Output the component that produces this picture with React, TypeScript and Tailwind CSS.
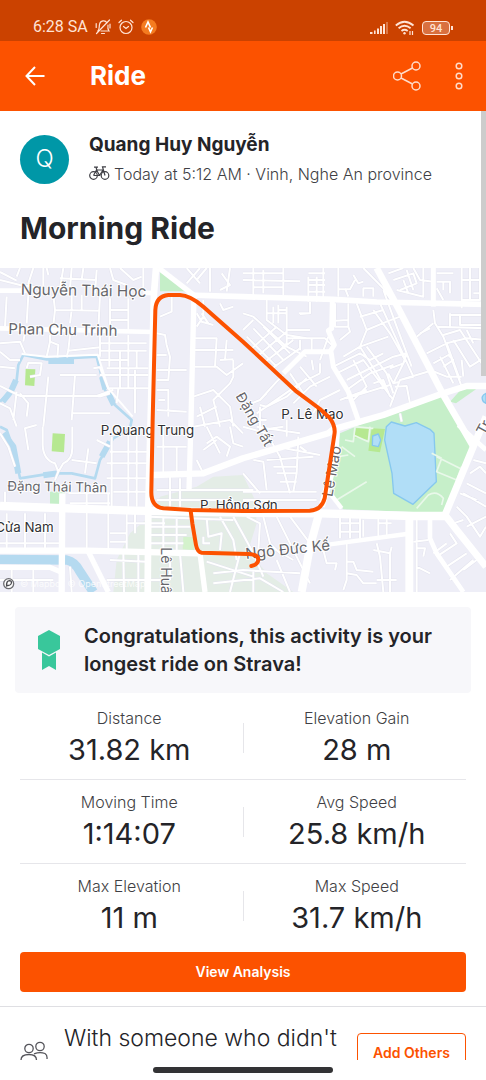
import type { ReactNode } from "react";

const stats = [
  [
    { label: "Distance", value: "31.82 km" },
    { label: "Elevation Gain", value: "28 m" },
  ],
  [
    { label: "Moving Time", value: "1:14:07" },
    { label: "Avg Speed", value: "25.8 km/h" },
  ],
  [
    { label: "Max Elevation", value: "11 m" },
    { label: "Max Speed", value: "31.7 km/h" },
  ],
];

// streets, grouped by part of town
const minorRoads = [
  // north west
  "M60 24 L50 50 M100 24 L85 70 L90 85 M0 60 L60 75 L130 85 M0 36 L50 62 M130 24 V85 M190 24 L180 85 M180 55 L290 60 M215 24 L210 85 M290 30 L285 100 M330 24 L340 60 L380 75 M250 24 L245 60 M360 24 L400 60 L425 50 M430 24 V85 M380 75 V100",
  "M20 110 L15 200 M85 105 L80 190 M160 105 L165 150 L160 195 M215 105 V150 L210 190 M245 105 V155 M300 105 L295 210 M330 115 V210 M385 115 V210 M165 150 L300 152 M330 150 H385 M330 180 H385",
  "M0 250 L60 245 L75 280 M75 215 L70 245 M150 225 V245 L140 290 M150 245 L175 255 L172 292 M210 225 L205 270 L200 292 M205 272 L300 262 M300 225 V290 M328 220 V320 M385 225 V320 M300 250 H440 M300 272 H440 M300 300 H385 M320 325 H445 M300 345 H445 M360 275 V385 M410 275 V325 M280 325 L300 322 L325 385 H450 M385 325 V385 M405 330 V460 M355 385 L350 430",
  "M0 275 L30 300 L60 300 M0 320 L45 325 M90 350 L120 345 L125 310 L85 308 L80 325 M180 345 H290 M225 345 L215 480 M60 408 H290 L340 390 M60 400 L85 430 L80 470 M0 378 L60 408 M145 350 L140 400 L130 500 M215 460 H330 M50 395 L40 480 M330 400 L300 410",
  // west fortress
  "M0 430 L30 445 L50 500 M110 495 L75 505 L85 570 M128 500 V555 Q130 600 165 610 L175 635 L190 610 Q218 600 217 560 V500 M265 565 L255 640 M215 600 L290 610 M290 540 L330 560 M175 635 L165 660 M335 530 V740 M385 500 V740 M410 520 V740 M330 575 H450 M320 610 H450 M320 655 H450 M340 695 H450 M0 520 L25 560 L45 620 M140 24 L145 45",
  // south west
  "M15 695 V735 M75 760 V870 M135 760 V870 M0 790 H60 M20 760 V870 M0 850 H180 M260 700 V870 M325 700 V870 M205 700 H330 M210 730 H330 M380 750 V870 M330 820 H380 M330 845 H380 M405 760 V820 M445 790 H495 M445 825 H560 M380 790 H440 M100 920 V996 M35 920 V996 M0 960 H160 M210 920 L215 996 M370 880 L372 996 M415 880 V996 M320 960 L500 960 M330 900 L440 905",
  // centre west
  "M470 220 L495 225 L500 255 L510 290 L505 360 H470 M470 285 H500 M470 390 H505 V470 M475 420 L495 420 M515 110 V155 L480 170 M470 330 H560 M470 450 L560 455 M490 500 V640 M470 560 H560 M530 560 V650 M470 690 H760 M510 650 V740 M540 655 V740 M470 720 H700",
  "M590 160 L605 185 L640 195 M600 70 L560 24 M560 70 L600 24 M620 24 L590 60 M585 235 H650 L645 320 M610 120 V170 L590 200 M585 270 H700 M585 320 H650 L680 345 L729 310 M660 300 L700 298 M680 240 L675 300 M700 300 V350 L690 370 L640 420 L660 500 M580 410 L640 390 L690 440 L700 500 M590 470 L650 440 M600 440 L615 500 M625 190 L605 160 M660 130 L670 150 L700 140 M580 500 L690 480 L729 520 M620 550 L650 530 L690 560 L680 590 M690 500 L700 550 L729 560 M590 600 L610 640 M620 500 L660 580 M650 540 L610 570",
  // north centre
  "M630 24 V95 M665 40 L690 75 L660 90 M690 24 L680 95 M760 24 V105 M850 24 V105 M729 60 L900 64 M760 82 H850 M790 30 V100 M729 40 H850 M925 50 V125 M970 24 V125 M925 60 H975 M925 75 H975 M925 95 H975 M950 50 V125 M975 40 H925 M1015 24 V110 M1015 88 H1050 L1065 60 M1045 110 L1035 85 M1090 110 V85 H1120 V110 M1090 24 L1150 85 L1180 130 M1060 45 L1075 70 L1090 65",
  "M800 120 V180 L860 225 L920 235 M835 135 V190 M800 160 H860 M820 140 V190 M835 150 H860 M860 140 V250 L830 280 M897 160 H930 V125 M930 160 L900 162 M860 210 H930 M860 235 H975 L1000 260 M900 240 V270 M935 235 V275 M985 230 L960 300 M1005 130 V200 H1045 V130 M1045 180 L1005 182 M1045 200 L1050 215 L1020 240 M1070 130 L1100 210 L1080 260 L1130 340 L1165 400",
  "M729 160 L760 170 L860 260 L920 290 M729 210 L760 180 M750 270 L830 200 M770 290 L860 215 M790 310 L880 240 M810 330 L900 265 M740 230 L830 320 M760 205 L850 300 M729 250 L770 285 M790 200 L870 280 M780 420 L830 365 L850 345 M770 460 L900 370 L960 340 M780 435 L800 440 L860 410 L920 355 M870 340 L910 400 M900 320 L950 380 M960 310 V340 M935 300 L940 330 M880 430 L930 380 L990 350 M940 460 L960 420 L1020 390 M1030 290 L1080 260 L1165 230",
  "M1000 320 L1080 280 L1110 300 L1150 280 M1010 340 L1090 300 L1180 420 M1040 390 L1110 340 L1180 315 M1060 300 L1100 380 L1050 430 M1100 260 L1160 340 L1180 400 M1120 370 L1150 360 L1170 410 M1040 415 L1170 375 M1020 420 L1100 390 M1040 360 L1100 330 L1180 290 L1220 280 L1210 310 L1170 325",
  "M1080 170 L1150 150 M1100 210 L1160 185 L1200 170 M1120 150 L1170 220 L1215 300 L1180 370 M1140 130 L1240 350 L1200 360 L1170 440 M1150 90 L1190 200 L1235 320 M1165 340 L1180 370 L1200 365 M1185 380 L1220 378 L1230 430 M1200 460 L1205 485 M1200 360 L1300 330",
  // north east
  "M1165 40 L1210 24 M1180 60 L1240 40 L1250 70 L1200 90 M1240 24 L1260 60 L1300 65 M1190 90 L1270 110 V24 M1220 30 L1240 90 M1210 60 L1225 100 M1310 85 L1330 120 M1310 65 H1350 V100 M1330 65 V90 M1385 24 V145 M1410 24 V120 M1385 120 H1440 V24 M1385 60 H1440 M1420 100 H1458 M1310 40 H1360",
  "M1300 150 L1305 190 L1330 230 L1385 380 M1250 230 L1300 190 M1260 220 L1290 205 M1310 200 L1458 205 M1350 160 V200 M1350 165 H1458 M1380 165 V195 H1458 M1330 225 L1380 210 L1458 330 M1280 280 L1340 250 L1400 235 L1458 240 M1300 310 L1345 285 L1360 300 L1330 320 M1340 250 L1380 360 M1360 240 L1410 320 L1458 290 M1400 210 L1420 250 M1290 330 L1340 350 H1385 M1320 290 L1360 370 M1385 300 L1390 350",
  // centre
  "M729 440 L780 420 L800 400 M740 470 L800 480 M750 450 V500 M780 440 V510 L850 500 M770 500 L900 520 M729 500 L800 520 L840 590 L870 700 M760 600 L790 605 L800 690 M729 640 L780 700 M729 695 H950 M800 600 L940 590 M830 560 L960 585 M820 620 H890 M830 640 H890 M840 665 H890 M895 530 L890 640 L880 695 M900 560 L920 575 M729 720 H950 M860 480 V530",
  // south centre
  "M450 770 L700 780 M490 770 V870 M530 770 V870 M450 800 H570 M450 850 H550 M620 775 L625 830 L665 820 L660 870 M610 830 V850 H630 M660 770 L700 840 L710 900 M700 770 L760 880 L790 950 M740 770 L780 790 L775 870 M790 770 L810 850 L850 890 M830 770 L930 970 M870 770 L930 850 M620 905 L760 950 M640 940 L729 930 L900 940 M640 970 L780 955 L850 996 M830 900 L870 996 M720 880 L690 996 M760 930 V996 M810 860 L880 900 M510 890 V960 M540 880 L550 996",
  // south east
  "M1020 770 V835 M1050 770 V835 M1080 770 V835 M1020 790 H1080 M1020 815 H1080 M1090 780 V830 M1135 770 V830 H1175 M1135 790 H1175 M1160 770 V830 M970 870 L980 910 H1010 L1005 930 M1040 850 V960 L1030 990 M1040 905 H1060 L1070 930 L1120 935 M1040 940 L1070 945 L1090 970 H1130 M1130 850 L1140 890 L1150 996 M1120 870 L1170 880 L1175 860 M1190 960 H1130 M1170 880 V996",
  "M1250 770 V996 M1250 865 H1275 L1270 890 M1250 920 L1290 940 M1285 840 L1240 845 M1300 880 L1340 850 M1310 890 L1370 850 L1350 820 M1340 920 L1400 880 M1390 930 L1430 900 M1350 960 L1420 900 M1360 790 L1390 780 M1370 740 L1400 770 L1440 830 L1458 800 M1390 700 L1458 740 M1400 670 L1458 700 M1410 640 L1440 620 L1458 640 M1430 720 L1380 700 M1420 600 L1458 610 M1400 800 L1458 770",
];

const parkPaths =
  "M1310 590 L1390 630 M1325 595 L1310 635 L1370 660 L1385 620 M1295 580 L1325 595 M1250 745 L1285 705 Q1310 690 1330 715 L1325 735 M1010 720 L1100 665 M1035 540 L1060 545 L1065 500 M1025 560 L1065 590 M1015 590 L1045 585 M1060 525 L1105 545 L1110 500 M1060 500 L1120 505";

const majorRoads = [
  { width: 14, d: "M0 92 H80 M430 98 L470 100 M0 205 L460 216" },
  { width: 20, d: "M468 24 L462 100 L445 740 L443 996" },
  { width: 16, d: "M476 24 L590 112 M582 105 L573 480 L567 690" },
  { width: 17, d: "M560 105 L729 110 L1000 118 L1130 126 L1458 133" },
  { width: 20, d: "M1130 24 L1195 145 L1330 405 L1420 560" },
  { width: 15, d: "M1300 24 V140" },
  { width: 15, d: "M997 120 L995 205 L985 212 L1003 255 L990 275 H915 L850 340 M993 275 L1000 320 L1045 395 L1078 490" },
  { width: 19, d: "M1458 378 H1400 L1330 400 L1150 465 L1010 505 M1010 500 L985 520 L729 595 L610 640 L460 645" },
  { width: 25, d: "M0 738 L400 752 L729 758 L960 760 L1240 768 H1340" },
  { width: 21, d: "M1458 470 L1420 560 L1335 765 L1370 810 L1458 920" },
  { width: 19, d: "M0 872 L260 872 L600 880 M187 700 L185 996" },
  { width: 16, d: "M265 875 L325 996 M0 922 H150 L180 935 M600 880 L615 996" },
  { width: 24, d: "M960 750 L930 860 L905 996" },
  { width: 13, d: "M990 700 L1025 745 M990 853 L1220 822" },
  { width: 24, d: "M1228 770 V996" },
  { width: 14, d: "M1290 775 V835 L1310 880 L1390 996 M1375 495 L1458 570" },
  { width: 20, d: "M1010 505 L1005 600 L965 740" },
];

function StatusBar() {
  return (
    <div className="flex h-[41px] items-end justify-between bg-[#cb4200] pr-[33px] pb-[5px] pl-[33px] text-[#ffe3d5]">
      <div className="flex items-center gap-[7px]">
        <span className="font-[Roboto] text-base leading-[18px]">6:28 SA</span>
        <svg className="h-4 w-4" viewBox="0 0 16 16" fill="none" stroke="currentColor" strokeWidth="1.2" strokeLinecap="round">
          <path d="M3.2 11.8 C4.500 10 4 8 4.500 5.500 C5.200 1 10.500 0.800 11.800 3.800 M13 6 C12.500 9 12.500 10 14 12 H6 M2.500 12 H3.500" />
          <path d="M14.500 1 L1.500 14.500 M6.500 14.500 H9.500 M1.200 4.500 V8.500 M15 5 V9" />
        </svg>
        <svg className="h-4 w-4" viewBox="0 0 16 16" fill="none" stroke="currentColor" strokeWidth="1.2" strokeLinecap="round">
          <circle cx="8" cy="8.500" r="6" />
          <path d="M5.500 7.500 L8 9.500 L10.500 7.500 M1 3.500 L3.500 1.200 M15 3.500 L12.500 1.200" />
        </svg>
        <svg className="h-4 w-4" viewBox="0 0 16 16">
          <circle cx="8" cy="8" r="7.800" fill="#f47b20" />
          <path d="M4.500 8.500 L7 3 L9.500 8.500 M7.500 8.500 L9.500 12.800 L11.500 8.500" fill="none" stroke="#fff" strokeWidth="1.600" />
        </svg>
      </div>
      <div className="flex items-center gap-[7px]">
        <svg className="h-4 w-[18px]" viewBox="0 0 18 16" fill="currentColor">
          <path d="M0 12 h2.500 v2 h-2.500z M4 10.500 h1.600 v3.500 h-1.600z M7 8.500 h2 v5.500 h-2z M10 6 h2 v8 h-2z M13 4 h2 v10 h-2z" />
          <path d="M16 2 h2 v12 h-2z" opacity="0.35" />
        </svg>
        <svg className="h-4 w-5" viewBox="0 0 20 16" fill="none" stroke="currentColor" strokeWidth="1.800">
          <path d="M0.800 5.500 Q9.500 -2 18.500 5.500 M3.600 8.300 Q9.500 3.200 15.600 8.300 M6.500 11 Q9.500 8.500 12.700 11" />
          <circle cx="9.500" cy="13.300" r="1.200" fill="currentColor" stroke="none" />
          <path d="M15 11 V15 M17.500 11 V15" strokeWidth="1.200" />
        </svg>
        <div className="flex items-center gap-px">
          <div className="flex h-3.5 w-7 items-center justify-center rounded-[4px] border border-[#ffe3d5] bg-[#d9703f] font-[Roboto] text-[11px] leading-none font-medium">
            94
          </div>
          <div className="h-1 w-0.5 bg-[#ffe3d5]" />
        </div>
      </div>
    </div>
  );
}

function Toolbar() {
  return (
    <header className="flex h-[70px] items-center bg-[#fc5200] pr-[23px] pl-[25px] text-white">
      <button type="button" aria-label="Back" className="mr-[45px]">
        <svg className="h-5 w-5" viewBox="0 0 20 20" fill="none" stroke="currentColor" strokeWidth="2">
          <path d="M19.500 10 H2 M10 1 L1.500 10 L10 19" />
        </svg>
      </button>
      <h1 className="flex-1 text-[26px] leading-8 font-bold">Ride</h1>
      <button type="button" aria-label="Share" className="mr-[34px]">
        <svg className="h-[30px] w-7" viewBox="0 0 28 30" fill="none" stroke="#ffdcca" strokeWidth="1.500">
          <circle cx="4.500" cy="15" r="4" />
          <circle cx="23" cy="5" r="4" />
          <circle cx="23" cy="25" r="4" />
          <path d="M8 13 L19.500 7 M8 17 L19.500 23" />
        </svg>
      </button>
      <button type="button" aria-label="More options">
        <svg className="h-7 w-2" viewBox="0 0 8 28" fill="none" stroke="#ffdcca" strokeWidth="1.500">
          <circle cx="4" cy="4" r="2.800" />
          <circle cx="4" cy="14" r="2.800" />
          <circle cx="4" cy="24" r="2.800" />
        </svg>
      </button>
    </header>
  );
}

function MapLabel({ x, y, size = 46, rotate = 0, dark = false, children }: { x: number; y: number; size?: number; rotate?: number; dark?: boolean; children: ReactNode }) {
  return (
    <text
      x={x}
      y={y}
      fontSize={size}
      fill={dark ? "#2f2f33" : "#66666b"}
      stroke="#fff"
      strokeWidth="6"
      paintOrder="stroke"
      transform={`rotate(${rotate} ${x} ${y})`}
    >
      {children}
    </text>
  );
}

function RouteMap() {
  const minor = minorRoads.join(" ");
  return (
    <svg className="block h-auto w-full" viewBox="0 24 1458 972" role="img" aria-label="Route map" strokeLinejoin="round">
      <rect y="24" width="1458" height="972" fill="#eeeef7" />

      {/* neighbourhoods and parks */}
      <path d="M340 996 L350 900 L390 820 L460 760 L480 710 L590 680 L640 650 L729 645 L765 720 L770 790 L745 870 L800 940 L880 996 Z" fill="#e4ede6" />
      <path d="M480 30 L555 94 L480 94 Z" fill="#c5eec8" />
      <path d="M150 695 H195 V735 H150 Z" fill="#c5eec8" />
      <path d="M77 327 L106 328 L103 378 L75 376 Z" fill="#b6e891" />
      <path d="M158 520 L195 522 L192 577 L155 574 Z" fill="#b6e891" />
      <path d="M550 830 L580 832 L582 870 L548 868 Z" fill="#d4f2cc" />
      <path d="M1020 520 L1150 465 L1329 405 L1420 560 L1335 755 L1290 758 L1030 748 L990 705 Z" fill="#c6efc9" />
      <path d="M1350 425 L1385 386 L1430 386 L1368 430 Z" fill="#c6efc9" />
      <path d="M1068 505 L1110 505 L1105 540 L1062 532 Z M1115 505 L1155 507 L1140 577 L1105 572 Z" fill="#b6e891" />
      <g fill="#b1def7" stroke="#86c8ee" strokeWidth="4">
        <path d="M1159 500 L1174 486 L1215 498 L1249 488 L1290 508 L1302 520 L1309 665 L1239 733 L1181 700 L1176 640 L1154 540 Z" />
        <path d="M1118 528 L1135 522 L1142 540 L1135 560 L1117 556 Z" />
        <path d="M1458 400 Q1440 408 1450 425 L1458 430 Z" />
      </g>

      {/* canals */}
      <g fill="none" stroke="#b5daf0">
        <path d="M0 425 L30 395 L50 360 L55 315 L70 285 L140 298 L290 290 L300 330 L315 390 L345 435 L395 480 L390 505 L340 535 L300 600 L285 655 L215 640 L155 640 L60 655 L45 580 L20 510 L0 500" strokeWidth="8" />
        <path d="M145 303 H222 M48 360 L32 395 L8 425 M306 350 L316 388 M325 400 L342 435 M330 545 L305 590 M130 646 L175 640 M10 520 L40 560 L55 640" strokeWidth="18" />
        <path d="M0 898 L200 900 Q225 905 240 935 L280 996" strokeWidth="28" />
      </g>

      <g fill="none">
        <path d={minor} stroke="#e3e3ee" strokeWidth="9" />
        <path d={minor} stroke="#fff" strokeWidth="6" />
        <path d={parkPaths} stroke="#e9f8ea" strokeWidth="5" />
        <path d="M65 282 L140 290 L293 284 L325 385 L398 470" stroke="#fff" strokeWidth="6" />
        {majorRoads.map((road) => (
          <path key={road.d} d={road.d} stroke="#fff" strokeWidth={road.width} />
        ))}
      </g>

      <MapLabel x={62} y={104} rotate={1}>Nguyễn Thái Học</MapLabel>
      <MapLabel x={25} y={222} size={45} rotate={1}>Phan Chu Trinh</MapLabel>
      <MapLabel x={22} y={692} size={40} rotate={1}>Đặng Thái Thân</MapLabel>
      <MapLabel x={706} y={408} size={42} rotate={60}>Đặng Tất</MapLabel>
      <MapLabel x={738} y={897} size={45} rotate={-6}>Ngô Đức Kế</MapLabel>
      <MapLabel x={484} y={862} size={42} rotate={90}>Lê Huân</MapLabel>
      <MapLabel x={997} y={712} size={44} rotate={-80}>Lê Mao</MapLabel>
      <MapLabel x={1454} y={528} size={44} rotate={-62}>Tr</MapLabel>
      <MapLabel x={302} y={526} size={40} dark>P.Quang Trung</MapLabel>
      <MapLabel x={844} y={476} size={40} dark>P. Lê Mao</MapLabel>
      <MapLabel x={600} y={751} size={40} dark>P. Hồng Sơn</MapLabel>
      <MapLabel x={-14} y={817} size={40} dark>Cửa Nam</MapLabel>

      <g fill="none" stroke="#fc5200" strokeWidth="12" strokeLinecap="round">
        <path d="M490 745 L572 750 L729 753 L929 752 Q965 750 974 715 L1003 525 Q1008 500 990 475 L960 447 L890 395 L729 245 L610 140 Q570 106 540 105 L505 105 Q468 108 466 150 L458 480 L454 695 Q453 740 490 745 Z" />
        <path d="M572 752 L577 790 L588 855 Q592 876 605 878 L745 882 Q776 884 775 900 Q773 914 754 918" />
      </g>

      <circle cx="26" cy="971" r="15" fill="#fff" stroke="#6d6d72" strokeWidth="4" />
      <path d="M20 980 Q18 962 29 962 Q37 964 33 972 Q29 978 20 976" fill="none" stroke="#4a4a4f" strokeWidth="4" />
      <text x="60" y="980" fontSize="27" fill="#fff" opacity="0.8">© Mapbox © OpenStreetMap</text>
    </svg>
  );
}

function ActivityHeader() {
  return (
    <section className="px-5 pt-[19px] pb-5">
      <div className="flex items-center gap-5">
        <div className="flex h-[49px] w-[49px] shrink-0 items-center justify-center rounded-full bg-[#0097a7] text-2xl leading-none font-light text-white">
          Q
        </div>
        <div className="min-w-0 flex-1">
          <p className="text-[19px] leading-[30px] font-bold">Quang Huy Nguyễn</p>
          <p className="flex items-center gap-1 leading-7 font-light whitespace-nowrap text-[#3f3f45]">
            <svg className="h-4 w-[21px] shrink-0" viewBox="0 0 21 16" fill="none" stroke="currentColor" strokeWidth="1.200">
              <circle cx="4.500" cy="9.500" r="3.800" />
              <circle cx="16" cy="9.500" r="3.800" />
              <path d="M4.500 9.500 L7.500 4 L10.500 9.500 H4.500 M10.500 9.500 L14 4 H7.500 M5 1.200 H9 M7 1.200 L7.800 4 M16 9.500 L13.500 0.800 H17" />
            </svg>
            Today at 5:12 AM · Vinh, Nghe An province
          </p>
        </div>
      </div>
      <h2 className="mt-5 text-[30px] leading-10 font-bold">Morning Ride</h2>
    </section>
  );
}

export default function App() {
  return (
    <div className="flex h-screen flex-col bg-white font-[Inter,sans-serif] text-[#242428]">
      <StatusBar />
      <Toolbar />

      <main className="relative min-h-0 flex-1 overflow-hidden">
        <ActivityHeader />
        <RouteMap />

        <div className="mx-[15px] mt-[15px] flex items-center rounded bg-[#f7f7fa] py-[15px] pr-4 pl-[23px]">
          <svg className="mr-6 h-10 w-[22px] shrink-0" viewBox="0 0 22 40" fill="#39c79b">
            <path d="M11 0 L22 6 V19 L11 25 L0 19 V6 Z" />
            <path d="M4 22.500 L11 26.500 L18 22.500 V40 L11 36 L4 40 Z" />
          </svg>
          <p className="text-xl leading-7 font-semibold">Congratulations, this activity is your longest ride on Strava!</p>
        </div>

        <dl className="mx-5 mt-[3px]">
          {stats.map((row) => (
            <div key={row[0].label} className="flex h-[84px] items-center border-b border-[#e6e6ea] last:border-b-0">
              <div className="flex-1 text-center">
                <dt className="leading-6 font-light text-[#3f3f45]">{row[0].label}</dt>
                <dd className="text-[29px] leading-10">{row[0].value}</dd>
              </div>
              <div className="mx-1 h-[30px] w-px bg-[#e6e6ea]" />
              <div className="flex-1 text-center">
                <dt className="leading-6 font-light text-[#3f3f45]">{row[1].label}</dt>
                <dd className="text-[29px] leading-10">{row[1].value}</dd>
              </div>
            </div>
          ))}
        </dl>

        <div className="px-5 pt-1 pb-3.5">
          <button type="button" className="h-10 w-full rounded bg-[#fc5200] text-sm font-semibold text-white">
            View Analysis
          </button>
        </div>

        <section className="flex items-start border-t border-[#dfdfe3] px-5 pt-4">
          <svg className="mt-[18px] mr-4 h-7 w-7 shrink-0" viewBox="0 0 28 28" fill="none" stroke="#55555b" strokeWidth="1.300">
            <circle cx="9" cy="7.500" r="4.200" />
            <circle cx="20" cy="5.500" r="4.200" />
            <path d="M1 19 Q1 13.500 9 13.500 Q16.500 13.500 16.500 19 M14 12.800 Q20 10.500 25 12.500 Q27.500 14 27 18" />
          </svg>
          <p className="flex-1 text-[23px] leading-[30px] font-light whitespace-nowrap">With someone who didn't</p>
          <button type="button" className="mt-[10px] h-10 w-[109px] shrink-0 rounded border border-[#fc5200] text-sm font-semibold text-[#fc5200]">
            Add Others
          </button>
        </section>

        {/* scroll position */}
        <div className="absolute top-0 right-0 h-[265px] w-[5px] bg-[#cccccc]" />
      </main>

      <div className="flex h-5 justify-center bg-white pt-[7px]">
        <div className="h-1.5 w-[180px] rounded-full bg-[#333335]" />
      </div>
    </div>
  );
}
